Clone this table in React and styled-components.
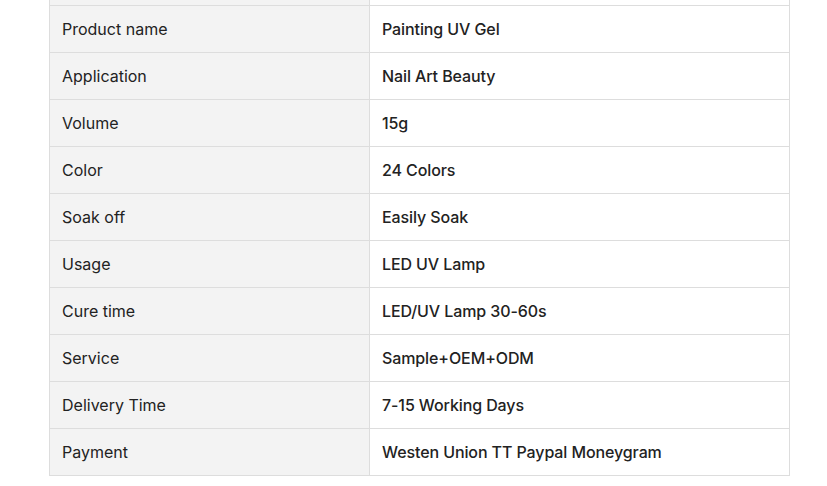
import styled, { createGlobalStyle } from 'styled-components'

const Global = createGlobalStyle`
  html, body {
    margin: 0;
    padding: 0;
    background: #fff;
  }
  body {
    font-family: Inter, "Noto Sans", sans-serif;
    color: #222;
    overflow: hidden;
  }
`

const Wrap = styled.div`
  padding-left: 49px;
  margin-top: -42px;
`

const Table = styled.table`
  width: 741px;
  border-collapse: collapse;
  font-size: 16px;
`

const Row = styled.tr`
  height: 47px;
`

const Cell = styled.td`
  border: 1px solid #dddddd;
  padding: 0 12px;
  vertical-align: middle;
  line-height: 20px;
  color: #222;
  background: ${p => (p.label ? '#f3f3f3' : '#fff')};
  font-weight: ${p => (p.label ? 400 : 480)};
  letter-spacing: ${p => (p.label ? '0' : '-0.1px')};
  width: ${p => (p.label ? '295px' : 'auto')};
`

const specs = [
  ['', ''],
  ['Product name', 'Painting UV Gel'],
  ['Application', 'Nail Art Beauty'],
  ['Volume', '15g'],
  ['Color', '24 Colors'],
  ['Soak off', 'Easily Soak'],
  ['Usage', 'LED UV Lamp'],
  ['Cure time', 'LED/UV Lamp 30-60s'],
  ['Service', 'Sample+OEM+ODM'],
  ['Delivery Time', '7-15 Working Days'],
  ['Payment', 'Westen Union TT Paypal Moneygram'],
]

const App = () => (
  <>
    <Global />
    <Wrap>
      <Table>
        <tbody>
          {specs.map(([k, v], i) => (
            <Row key={i}>
              <Cell label>{k}</Cell>
              <Cell>{v}</Cell>
            </Row>
          ))}
        </tbody>
      </Table>
    </Wrap>
  </>
)

export default App
